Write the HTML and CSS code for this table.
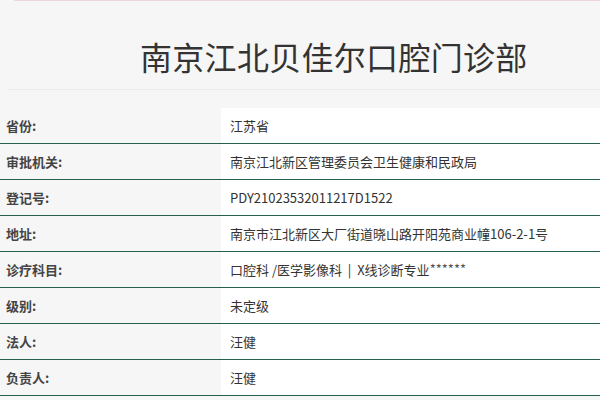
FILE: index.html
```html
<!DOCTYPE html>
<html lang="zh-CN">
<head>
<meta charset="utf-8">
<link rel="stylesheet" href="styles.css">
</head>
<body>
<div class="page">
  <div class="topline"></div>
  <div class="header">
    <h1 class="title">南京江北贝佳尔口腔门诊部</h1>
  </div>
  <div class="info">
    <div class="row"><div class="label">省份:</div><div class="value">江苏省</div></div>
    <div class="row"><div class="label">审批机关:</div><div class="value">南京江北新区管理委员会卫生健康和民政局</div></div>
    <div class="row"><div class="label">登记号:</div><div class="value">PDY21023532011217D1522</div></div>
    <div class="row"><div class="label">地址:</div><div class="value">南京市江北新区大厂街道晓山路开阳苑商业幢106-2-1号</div></div>
    <div class="row"><div class="label">诊疗科目:</div><div class="value">口腔科 /医学影像科 &nbsp;|&nbsp; X线诊断专业<span class="stars">******</span></div></div>
    <div class="row"><div class="label">级别:</div><div class="value">未定级</div></div>
    <div class="row"><div class="label">法人:</div><div class="value">汪健</div></div>
    <div class="row"><div class="label">负责人:</div><div class="value">汪健</div></div>
  </div>
</div>
</body>
</html>
```

FILE: styles.css
```css
html, body {
  margin: 0;
  padding: 0;
  background: #f6f6f6;
  font-family: "Noto Sans CJK SC", "Noto Sans", sans-serif;
  color: #333;
}
.page {
  width: 600px;
  overflow: hidden;
}
.topline {
  height: 1px;
  margin-left: 14px;
  background: #ecd6dc;
}
.header {
  margin-left: 8px;
  height: 88px;
  border-bottom: 1px solid #ebebeb;
}
.title {
  margin: 0;
  padding: 35px 0 0 132px;
  font-size: 32px;
  font-weight: normal;
  line-height: 40px;
  color: #333;
  letter-spacing: 0.3px;
}
.info {
  margin-top: 18px;
}
.row {
  display: flex;
  height: 35px;
  border-bottom: 1px solid #24604a;
}
.label {
  width: 215px;
  padding-left: 6px;
  display: flex;
  align-items: center;
  font-size: 13px;
  font-weight: bold;
  color: #444;
  background: #f6f6f6;
}
.value {
  flex: 1;
  padding-left: 9px;
  display: flex;
  align-items: center;
  font-size: 13px;
  color: #333;
  background: #fff;
  white-space: pre;
}
.stars {
  font-size: 13px;
  color: #555;
  margin-top: -2px;
}
```
